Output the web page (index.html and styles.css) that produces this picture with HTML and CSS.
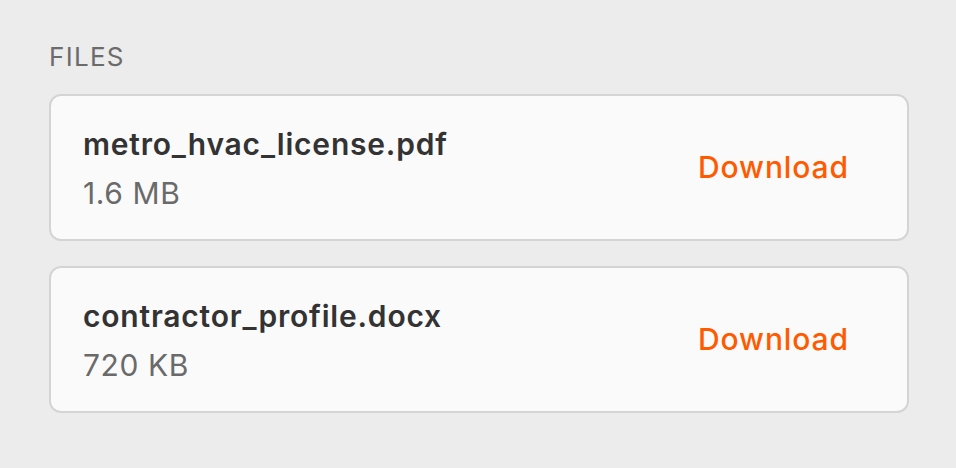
FILE: index.html
```html
<!DOCTYPE html>
<html>
<head>
<meta charset="utf-8">
<link rel="stylesheet" href="styles.css">
</head>
<body>
<section class="files">
  <h2 class="files-title">FILES</h2>
  <div class="file-list">
    <div class="file-card">
      <div class="file-info">
        <div class="file-name">metro_hvac_license.pdf</div>
        <div class="file-size">1.6 MB</div>
      </div>
      <a class="file-download">Download</a>
    </div>
    <div class="file-card">
      <div class="file-info">
        <div class="file-name">contractor_profile.docx</div>
        <div class="file-size">720 KB</div>
      </div>
      <a class="file-download">Download</a>
    </div>
  </div>
</section>
</body>
</html>
```
FILE: styles.css
```css
html, body {
  margin: 0;
  padding: 0;
  background: #ececec;
}
body {
  font-family: Inter, "Noto Sans", sans-serif;
  width: 956px;
  height: 468px;
  overflow: hidden;
}
.files {
  padding: 41px 47px 0 49px;
}
.files-title {
  margin: 0 0 21px 0;
  font-size: 26px;
  font-weight: 400;
  letter-spacing: 1.3px;
  color: #6b6b6b;
  line-height: 32px;
}
.file-list {
  display: flex;
  flex-direction: column;
  gap: 25px;
}
.file-card {
  display: flex;
  align-items: center;
  justify-content: space-between;
  height: 147px;
  box-sizing: border-box;
  padding: 0 58px 0 32px;
  background: #fafafa;
  border: 2px solid #d4d4d4;
  border-radius: 12px;
}
.file-info {
  display: flex;
  flex-direction: column;
  gap: 13px;
  margin-top: 1px;
}
.file-name {
  font-size: 30px;
  font-weight: 600;
  letter-spacing: 0.8px;
  color: #333333;
  line-height: 36px;
}
.file-size {
  font-size: 30px;
  font-weight: 400;
  letter-spacing: 0.6px;
  color: #6a6a6a;
  line-height: 36px;
}
.file-download {
  font-size: 30px;
  font-weight: 500;
  letter-spacing: 0.9px;
  color: #ff5a00;
  margin-top: -1px;
}
```
